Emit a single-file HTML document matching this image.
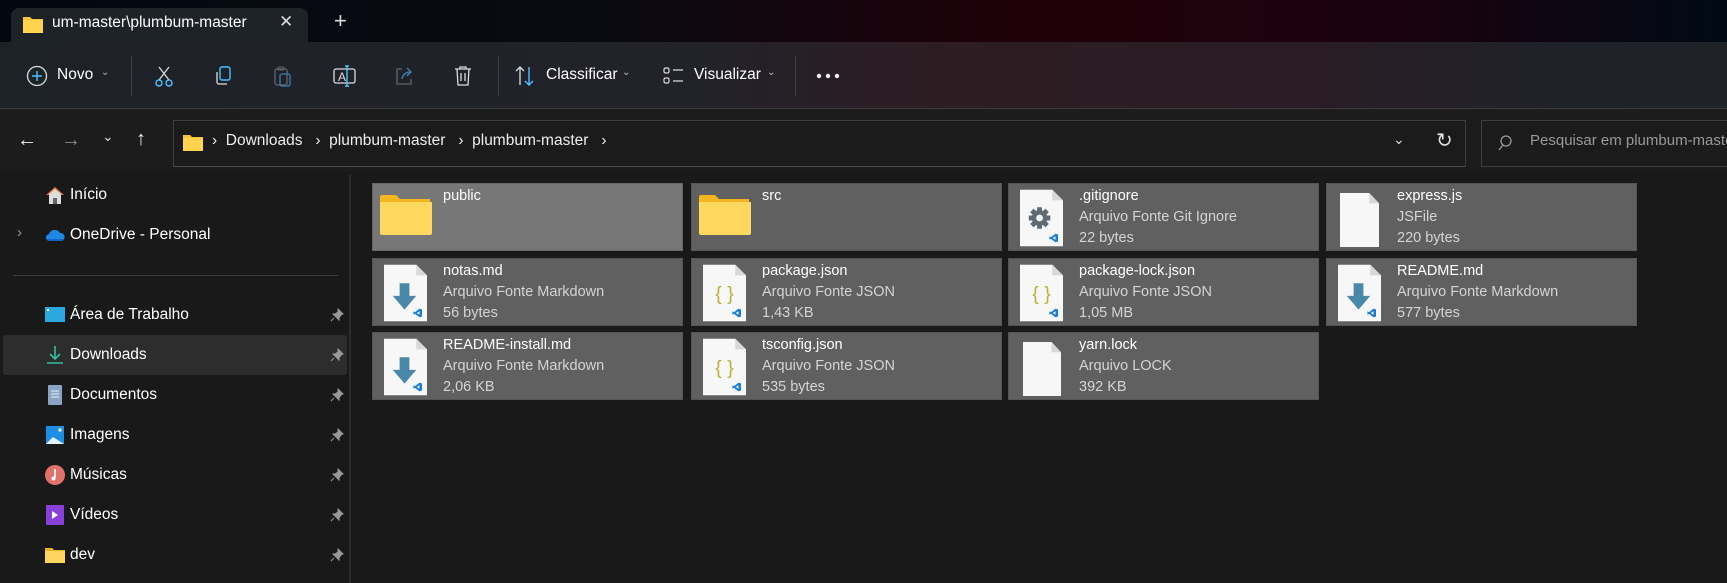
<!DOCTYPE html>
<html><head><meta charset="utf-8"><style>
*{box-sizing:border-box;margin:0;padding:0}
body{width:1727px;height:583px;overflow:hidden;background:#191919;font-family:"Segoe UI","Liberation Sans",sans-serif;color:#fff;position:relative;font-size:15px}
.abs{position:absolute}
#tabs{left:0;top:0;width:1727px;height:42px;background:linear-gradient(90deg,#02080f 0%,#0a0a12 35%,#200108 60%,#1c0210 80%,#000a14 100%)}
#tab{left:11px;top:8px;width:297px;height:36px;background:#1e2328;border-radius:8px 8px 0 0}
#tool{left:0;top:42px;width:1727px;height:67px;background:linear-gradient(90deg,#1d2227 0%,#22222a 40%,#2d1c22 55%,#2a1c24 75%,#1f2129 90%,#1f2227 100%);border-bottom:1px solid #3a3a3a}
.sep{width:1px;background:#3c3f44;height:40px;top:56px}
#nav{left:0;top:109px;width:1727px;height:62px;background:#1c1c1c}
#addr{left:173px;top:120px;width:1293px;height:47px;border:1px solid #3e3e3e;border-bottom-color:#4a4a4a;background:#1b1b1b}
#search{left:1481px;top:120px;width:260px;height:47px;border:1px solid #3e3e3e;background:#1b1b1b}
.t{position:absolute;white-space:nowrap}
.side{left:0;top:172px;width:350px;height:411px;background:#191919}
.si{position:absolute;left:44px;height:40px;width:300px;display:flex;align-items:center;font-size:15.5px}
.si svg{width:22px;height:22px;margin-right:4px;flex:none}
.pin{position:absolute;left:330px;width:14px;height:14px}
.tile{position:absolute;width:311px;height:68px;background:#606060;border:1px solid #555}
.tile .ic{position:absolute;left:11px;top:5px;width:43px;height:58px}
.tile .n{position:absolute;left:70px;top:2px;font-size:14.5px;line-height:21px;color:#fff}
.tile .n span{color:#d4d4d4;display:block}
</style></head><body>
<div id="tabs" class="abs"></div>
<div id="tab" class="abs">
 <svg class="abs" style="left:12px;top:7px" width="20" height="18" viewBox="0 0 20 18"><path d="M0 2h7l2 2h11v14H0z" fill="#f8c23a"/><path d="M0 5h20v13H0z" fill="#ffd34e"/></svg>
 <div class="t" style="left:41px;top:6px;font-size:15.5px;color:#fff">um-master\plumbum-master</div>
 <div class="t" style="left:268px;top:4px;font-size:17px;color:#ddd">✕</div>
</div>
<div class="t" style="left:334px;top:8px;font-size:22px;color:#ddd">+</div>
<div id="tool" class="abs"></div>
<svg class="abs" style="left:26px;top:65px" width="22" height="22" viewBox="0 0 22 22"><circle cx="11" cy="11" r="9.5" fill="none" stroke="#ddd" stroke-width="1.3"/><path d="M11 6v10M6 11h10" stroke="#4cc2ff" stroke-width="1.4"/></svg>
<div class="t" style="left:57px;top:66px;font-size:15.5px">Novo</div>
<div class="t" style="left:101px;top:67px;font-size:10px;color:#bbb">⌄</div>
<div class="abs sep" style="left:131px"></div>
<svg class="abs" style="left:153px;top:65px" width="22" height="22" viewBox="0 0 22 22"><path d="M6 2l10 13M16 2L6 15" stroke="#ddd" stroke-width="1.3" fill="none"/><circle cx="6" cy="18" r="3" fill="none" stroke="#4cc2ff" stroke-width="1.4"/><circle cx="16" cy="18" r="3" fill="none" stroke="#4cc2ff" stroke-width="1.4"/></svg>
<svg class="abs" style="left:212px;top:65px" width="22" height="22" viewBox="0 0 22 22"><rect x="8" y="2" width="10" height="13" rx="2" fill="none" stroke="#4cc2ff" stroke-width="1.4"/><path d="M5 7v10a2 2 0 0 0 2 2h8" fill="none" stroke="#ddd" stroke-width="1.3"/></svg>
<svg class="abs" style="left:272px;top:65px" width="22" height="22" viewBox="0 0 22 22"><rect x="3" y="4" width="12" height="16" rx="2" fill="none" stroke="#666" stroke-width="1.3"/><rect x="8" y="9" width="10" height="12" rx="2" fill="none" stroke="#3a7fb0" stroke-width="1.3"/><rect x="6" y="2" width="6" height="3" rx="1" fill="none" stroke="#666"/></svg>
<svg class="abs" style="left:333px;top:65px" width="24" height="22" viewBox="0 0 24 22"><rect x="1" y="4" width="21" height="14" rx="2" fill="none" stroke="#ddd" stroke-width="1.3"/><text x="5" y="16" font-size="12" fill="#ddd" font-family="Liberation Sans">A</text><path d="M14 1v20M12 1h4M12 21h4" stroke="#4cc2ff" stroke-width="1.4"/></svg>
<svg class="abs" style="left:393px;top:65px" width="22" height="22" viewBox="0 0 22 22"><path d="M9 4H4v15h14v-5" fill="none" stroke="#666" stroke-width="1.3"/><path d="M9 14c1-5 4-7 9-7M14 3l4 4-4 4" fill="none" stroke="#3a7fb0" stroke-width="1.4"/></svg>
<svg class="abs" style="left:452px;top:64px" width="22" height="24" viewBox="0 0 22 24"><path d="M3 5h16M8 5V3h6v2M5 5l1 16h10l1-16M9 9v8M13 9v8" fill="none" stroke="#ddd" stroke-width="1.3"/></svg>
<div class="abs sep" style="left:498px"></div>
<svg class="abs" style="left:514px;top:65px" width="22" height="22" viewBox="0 0 22 22"><path d="M6 20V2M2 6l4-4 4 4" fill="none" stroke="#ddd" stroke-width="1.3"/><path d="M15 2v18M11 16l4 4 4-4" fill="none" stroke="#4cc2ff" stroke-width="1.4"/></svg>
<div class="t" style="left:546px;top:66px;font-size:15.5px">Classificar</div>
<div class="t" style="left:622px;top:67px;font-size:10px;color:#bbb">⌄</div>
<svg class="abs" style="left:663px;top:66px" width="22" height="20" viewBox="0 0 22 20"><rect x="1" y="2" width="5" height="5" rx="1.5" fill="none" stroke="#ddd" stroke-width="1.2"/><rect x="1" y="12" width="5" height="5" rx="1.5" fill="none" stroke="#ddd" stroke-width="1.2"/><path d="M10 4h10M10 15h10" stroke="#ddd" stroke-width="1.3"/></svg>
<div class="t" style="left:694px;top:66px;font-size:15.5px">Visualizar</div>
<div class="t" style="left:767px;top:67px;font-size:10px;color:#bbb">⌄</div>
<div class="abs sep" style="left:795px"></div>
<svg class="abs" style="left:816px;top:73px" width="24" height="6" viewBox="0 0 24 6"><circle cx="3" cy="3" r="2.2" fill="#eee"/><circle cx="12" cy="3" r="2.2" fill="#eee"/><circle cx="21" cy="3" r="2.2" fill="#eee"/></svg>
<div id="nav" class="abs"></div>
<div class="t" style="left:17px;top:129px;font-size:20px;color:#eee">←</div>
<div class="t" style="left:61px;top:129px;font-size:20px;color:#888">→</div>
<div class="t" style="left:102px;top:128px;font-size:14px;color:#ddd">⌄</div>
<div class="t" style="left:136px;top:128px;font-size:20px;color:#eee">↑</div>
<div id="addr" class="abs"></div>
<svg class="abs" style="left:183px;top:134px" width="20" height="17" viewBox="0 0 20 17"><path d="M0 1h7l2 2h11v14H0z" fill="#f8c23a"/><path d="M0 4h20v13H0z" fill="#ffd34e"/></svg>
<div class="t" style="left:212px;top:132px;font-size:15.5px;color:#eee">›&nbsp;&nbsp;Downloads&nbsp;&nbsp;&nbsp;›&nbsp;&nbsp;plumbum-master&nbsp;&nbsp;&nbsp;›&nbsp;&nbsp;plumbum-master&nbsp;&nbsp;&nbsp;›</div>
<div class="t" style="left:1393px;top:131px;font-size:14px;color:#ddd">⌄</div>
<div class="t" style="left:1436px;top:128px;font-size:20px;color:#ddd">↻</div>
<div id="search" class="abs"></div>
<svg class="abs" style="left:1497px;top:134px" width="18" height="18" viewBox="0 0 18 18"><circle cx="9" cy="7" r="5" fill="none" stroke="#999" stroke-width="1.3"/><path d="M6 11l-4 5" stroke="#999" stroke-width="1.3"/></svg>
<div class="t" style="left:1530px;top:132px;font-size:15px;color:#999">Pesquisar em plumbum-master</div>
<div class="abs side"></div>
<div class="abs" style="left:349px;top:175px;width:2px;height:408px;background:#2b2b2b"></div>
<div class="abs" style="left:13px;top:275px;width:325px;height:1px;background:#3d3d3d"></div>
<div class="abs" style="left:3px;top:335px;width:344px;height:40px;background:#2d2d2d;border-radius:3px"></div>
<div class="t" style="left:17px;top:224px;font-size:15px;color:#999">›</div>
<div class="si" style="top:175px"><svg viewBox="0 0 22 22"><path d="M2 11L11 3l9 8" fill="#e8733a"/><path d="M5 10v10h12V10L11 5z" fill="#ddd"/><rect x="9" y="14" width="4" height="6" fill="#666"/></svg>Início</div>
<div class="si" style="top:215px"><svg viewBox="0 0 22 22"><path d="M2 15a4 4 0 0 1 3-5 6 6 0 0 1 11-1 4 4 0 0 1 4 6z" fill="#1e88e5"/><path d="M2 15h18a3 3 0 0 1-3 2H4z" fill="#0f64c8"/></svg>OneDrive - Personal</div>
<div class="si" style="top:295px"><svg viewBox="0 0 22 22"><rect x="1" y="3" width="20" height="15" fill="#2aa9e0"/><rect x="3" y="5" width="2" height="2" fill="#fff"/></svg>Área de Trabalho</div>
<div class="si" style="top:335px"><svg viewBox="0 0 22 22"><path d="M11 2v13M6 10l5 5 5-5M3 19h16" fill="none" stroke="#2ebf9f" stroke-width="1.6"/></svg>Downloads</div>
<div class="si" style="top:375px"><svg viewBox="0 0 22 22"><rect x="4" y="1" width="14" height="20" rx="1" fill="#8aa4c4"/><path d="M7 7h8M7 10h8M7 13h8" stroke="#e9eef5"/></svg>Documentos</div>
<div class="si" style="top:415px"><svg viewBox="0 0 22 22"><rect x="2" y="2" width="18" height="18" fill="#1e8ee5"/><path d="M2 20l7-7 11 7z" fill="#e6f3ff"/><circle cx="16" cy="6" r="1.6" fill="#fff"/></svg>Imagens</div>
<div class="si" style="top:455px"><svg viewBox="0 0 22 22"><circle cx="11" cy="11" r="10" fill="#e0726b"/><path d="M11 5v9" stroke="#fff" stroke-width="1.6"/><circle cx="9.5" cy="14.5" r="2" fill="#fff"/></svg>Músicas</div>
<div class="si" style="top:495px"><svg viewBox="0 0 22 22"><rect x="2" y="1" width="18" height="20" rx="1" fill="#8b3fd9"/><path d="M8 7v8l6-4z" fill="#fff"/></svg>Vídeos</div>
<div class="si" style="top:535px"><svg viewBox="0 0 22 22"><path d="M1 4h7l2 2h11v13H1z" fill="#f0b526"/><path d="M1 7h20v12H1z" fill="#ffd560"/></svg>dev</div>
<svg class="pin" style="top:308px" viewBox="0 0 14 14"><path d="M8 1l5 5-2 1-2 3 0 2-6-6 2 0 3-2zM4 10l-3 3" fill="#999" stroke="#999"/></svg>
<svg class="pin" style="top:348px" viewBox="0 0 14 14"><path d="M8 1l5 5-2 1-2 3 0 2-6-6 2 0 3-2zM4 10l-3 3" fill="#999" stroke="#999"/></svg>
<svg class="pin" style="top:388px" viewBox="0 0 14 14"><path d="M8 1l5 5-2 1-2 3 0 2-6-6 2 0 3-2zM4 10l-3 3" fill="#999" stroke="#999"/></svg>
<svg class="pin" style="top:428px" viewBox="0 0 14 14"><path d="M8 1l5 5-2 1-2 3 0 2-6-6 2 0 3-2zM4 10l-3 3" fill="#999" stroke="#999"/></svg>
<svg class="pin" style="top:468px" viewBox="0 0 14 14"><path d="M8 1l5 5-2 1-2 3 0 2-6-6 2 0 3-2zM4 10l-3 3" fill="#999" stroke="#999"/></svg>
<svg class="pin" style="top:508px" viewBox="0 0 14 14"><path d="M8 1l5 5-2 1-2 3 0 2-6-6 2 0 3-2zM4 10l-3 3" fill="#999" stroke="#999"/></svg>
<svg class="pin" style="top:548px" viewBox="0 0 14 14"><path d="M8 1l5 5-2 1-2 3 0 2-6-6 2 0 3-2zM4 10l-3 3" fill="#999" stroke="#999"/></svg>

<svg width="0" height="0" style="position:absolute"><defs>
<symbol id="pg" viewBox="0 0 44 58"><path d="M0 0h33l11 11v47H0z" fill="#f7f7f7"/><path d="M33 0v11h11" fill="#d8d8d8"/></symbol>
<symbol id="vs" viewBox="0 0 10 10"><path d="M7 0l3 1v8l-3 1-5-4-2 1V3l2 1zM7 3L4 5l3 2z" fill="#1a7fd4"/></symbol>
<symbol id="fd" viewBox="0 0 52 40"><path d="M0 2a2 2 0 0 1 2-2h14l4 4h30v34H0z" fill="#f5b51f"/><path d="M0 7h52v31a2 2 0 0 1-2 2H2a2 2 0 0 1-2-2z" fill="#ffd860"/></symbol>
<symbol id="md" viewBox="0 0 44 58"><use href="#pg" width="44" height="58"/><path d="M16 19h10v13h7L21 46 9 32h7z" fill="#4a88a8"/><use href="#vs" x="30" y="45" width="9" height="9"/></symbol>
<symbol id="js" viewBox="0 0 44 58"><use href="#pg" width="44" height="58"/><text x="22" y="36" text-anchor="middle" font-size="20" fill="#b9b23a" font-family="Liberation Sans">{ }</text><use href="#vs" x="30" y="45" width="9" height="9"/></symbol>
</defs></svg>

<!-- row 1 -->
<div class="tile" style="left:372px;top:183px;background:#777;border-color:#666"><svg class="ic" style="left:7px;top:11px;width:52px;height:40px"><use href="#fd"/></svg><div class="n">public</div></div>
<div class="tile" style="left:691px;top:183px"><svg class="ic" style="left:7px;top:11px;width:52px;height:40px"><use href="#fd"/></svg><div class="n">src</div></div>
<div class="tile" style="left:1008px;top:183px"><svg class="ic" viewBox="0 0 44 58"><use href="#pg" width="44" height="58"/><g transform="translate(20 29)"><circle r="8" fill="#5f6a73"/><path d="M-2.5-11h5v22h-5zM-11-2.5h22v5h-22z" fill="#5f6a73"/><path d="M-2.5-11h5v22h-5zM-11-2.5h22v5h-22z" fill="#5f6a73" transform="rotate(45)"/><circle r="3.5" fill="#f7f7f7"/></g><use href="#vs" x="30" y="45" width="9" height="9"/></svg><div class="n">.gitignore<span>Arquivo Fonte Git Ignore</span><span>22 bytes</span></div></div>
<div class="tile" style="left:1326px;top:183px"><svg class="ic" viewBox="0 0 44 58" style="left:13px;top:9px;width:39px;height:54px" preserveAspectRatio="none"><use href="#pg" width="44" height="58"/></svg><div class="n">express.js<span>JSFile</span><span>220 bytes</span></div></div>
<!-- row 2 -->
<div class="tile" style="left:372px;top:258px"><svg class="ic" viewBox="0 0 44 58"><use href="#md" width="44" height="58"/></svg><div class="n">notas.md<span>Arquivo Fonte Markdown</span><span>56 bytes</span></div></div>
<div class="tile" style="left:691px;top:258px"><svg class="ic" viewBox="0 0 44 58"><use href="#js" width="44" height="58"/></svg><div class="n">package.json<span>Arquivo Fonte JSON</span><span>1,43 KB</span></div></div>
<div class="tile" style="left:1008px;top:258px"><svg class="ic" viewBox="0 0 44 58"><use href="#js" width="44" height="58"/></svg><div class="n">package-lock.json<span>Arquivo Fonte JSON</span><span>1,05 MB</span></div></div>
<div class="tile" style="left:1326px;top:258px"><svg class="ic" viewBox="0 0 44 58"><use href="#md" width="44" height="58"/></svg><div class="n">README.md<span>Arquivo Fonte Markdown</span><span>577 bytes</span></div></div>
<!-- row 3 -->
<div class="tile" style="left:372px;top:332px"><svg class="ic" viewBox="0 0 44 58"><use href="#md" width="44" height="58"/></svg><div class="n">README-install.md<span>Arquivo Fonte Markdown</span><span>2,06 KB</span></div></div>
<div class="tile" style="left:691px;top:332px"><svg class="ic" viewBox="0 0 44 58"><use href="#js" width="44" height="58"/></svg><div class="n">tsconfig.json<span>Arquivo Fonte JSON</span><span>535 bytes</span></div></div>
<div class="tile" style="left:1008px;top:332px"><svg class="ic" viewBox="0 0 44 58" style="left:14px;top:9px;width:38px;height:54px" preserveAspectRatio="none"><use href="#pg" width="44" height="58"/></svg><div class="n">yarn.lock<span>Arquivo LOCK</span><span>392 KB</span></div></div>
</body></html>
